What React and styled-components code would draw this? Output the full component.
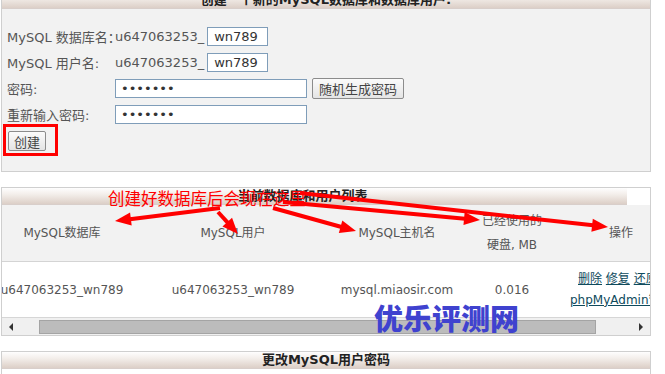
import React from 'react';
import styled, { createGlobalStyle } from 'styled-components';

const GlobalStyle = createGlobalStyle`
  html, body {
    margin: 0;
    padding: 0;
    background: #fff;
  }
  body {
    font-family: "DejaVu Sans", "Noto Sans CJK SC", sans-serif;
    font-size: 13px;
    color: #555;
    overflow: hidden;
  }
`;

const Page = styled.div`
  position: relative;
  width: 665px;
  height: 374px;
  overflow: hidden;
`;

// the page is scrolled down a little, so the first panel's title is cut
const Stack = styled.div`
  display: flex;
  flex-direction: column;
  gap: 15px;
  margin-top: -10px;
  padding-left: 1px;
`;

const Panel = styled.section`
  width: 650px;
  box-sizing: border-box;
  border: 1px solid #cfcfcf;
  background: ${(p) => p.$bg || '#f2f2f2'};
`;

const PanelHead = styled.div`
  width: ${(p) => p.$w || 'auto'};
  height: ${(p) => p.$h || 16}px;
  line-height: ${(p) => p.$h || 16}px;
  box-sizing: content-box;
  padding-right: ${(p) => p.$pr || 0}px;
  background: linear-gradient(#fefefe 0%, #f3eeea 40%, #dccfc7 100%);
  border-bottom: 1px solid #d8ceca;
  font-weight: bold;
  font-size: 13px;
  color: #222;
  text-align: center;
  white-space: nowrap;
  overflow: hidden;
`;

const FormBody = styled.div`
  padding: 14px 0 18px 5px;
`;

const FormGrid = styled.div`
  display: grid;
  grid-template-columns: 108px auto;
  grid-auto-rows: 26px;
  align-items: center;
`;

const Label = styled.span`
  color: #555;
  white-space: nowrap;
`;

const Value = styled.div`
  display: flex;
  align-items: center;
  gap: ${(p) => p.$gap || 3}px;
  white-space: nowrap;
`;

const TextInput = styled.input`
  box-sizing: border-box;
  width: ${(p) => p.$w}px;
  height: 19px;
  margin: 0;
  padding: 0 0 0 ${(p) => p.$pl || 6}px;
  border: 1px solid #7f9db9;
  background: #fff;
  font: 13px "DejaVu Sans", sans-serif;
  color: #333;
  outline: none;
`;

const Button = styled.button`
  box-sizing: border-box;
  height: ${(p) => p.$h || 20}px;
  margin: 0;
  padding: 0 ${(p) => p.$px || 6}px;
  border: 1px solid #8c8c8c;
  border-radius: 2px;
  background: linear-gradient(#fbfbfb, #e4e4e4);
  font: 13px "DejaVu Sans", "Noto Sans CJK SC", sans-serif;
  color: #444;
`;

const Marked = styled.div`
  display: inline-block;
  align-self: flex-start;
  margin-left: -1px;
  padding: 4px 9px 2px 2px;
  outline: 3px solid #ff0000;
  line-height: 0;
`;

const TableView = styled.div`
  overflow: hidden;
`;

const Grid = styled.div`
  display: grid;
  grid-template-columns: 170px 172px 156px 74px 144px;
  width: 716px;
  margin-left: -25px;
  height: ${(p) => p.$h}px;
  background: ${(p) => p.$bg};
  border-bottom: ${(p) => (p.$line ? '1px solid #d4d4d4' : 'none')};
  font-size: 12px;
  color: #555;
`;

const Cell = styled.div`
  display: flex;
  align-items: center;
  justify-content: ${(p) => (p.$left ? 'flex-start' : 'center')};
  padding-left: ${(p) => p.$pl || 0}px;
  text-align: center;
  line-height: 24px;
  white-space: nowrap;
`;

const Links = styled.div`
  text-align: left;
  line-height: 21px;
  & a {
    color: #0e4a5c;
    text-decoration: underline;
  }
`;

const LinkLine = styled.div`
  padding-left: ${(p) => p.$indent || 0}px;
  white-space: nowrap;
`;

const HScroll = styled.div`
  height: 17px;
  border-top: 1px solid #d6d6d6;
  background: #f0f0f0;
  display: flex;
  align-items: center;
`;

const ScrollEnd = styled.div`
  width: ${(p) => (p.$grow ? 'auto' : '37px')};
  flex: ${(p) => (p.$grow ? 1 : 'none')};
  display: flex;
  justify-content: ${(p) => (p.$dir === 'left' ? 'flex-start' : 'flex-end')};
  padding: ${(p) => (p.$dir === 'left' ? '0 0 0 7px' : '0 7px 0 0')};
  box-sizing: border-box;
`;

const Tri = styled.span`
  width: 0;
  height: 0;
  border-top: 4px solid transparent;
  border-bottom: 4px solid transparent;
  ${(p) => (p.$dir === 'left' ? 'border-right' : 'border-left')}: 4px solid #333;
`;

const Thumb = styled.div`
  box-sizing: border-box;
  width: 557px;
  height: 14px;
  background: #bcbcbc;
  border: 1px solid #a4a4a4;
`;

const BottomBody = styled.div`
  height: 40px;
  background: #fff;
`;

const Note = styled.div`
  position: absolute;
  left: 108px;
  top: 188px;
  font-family: "Noto Sans CJK SC", sans-serif;
  font-size: 16.5px;
  letter-spacing: 0;
  line-height: 20px;
  color: #ff0000;
  white-space: nowrap;
`;

const Arrows = styled.svg`
  position: absolute;
  left: 0;
  top: 0;
  pointer-events: none;
`;

const Watermark = styled.div`
  position: absolute;
  left: 374px;
  top: 299px;
  font-family: "Noto Sans CJK SC", sans-serif;
  font-weight: 900;
  font-size: 29px;
  line-height: 36px;
  color: #3f42cf;
  white-space: nowrap;
`;

const Arrow = ({ x1, y1, x2, y2 }) => {
  const dx = x2 - x1;
  const dy = y2 - y1;
  const len = Math.hypot(dx, dy);
  const ux = dx / len;
  const uy = dy / len;
  const hl = 16;
  const hw = 6.5;
  const bx = x2 - ux * hl;
  const by = y2 - uy * hl;
  const pts = `${x2},${y2} ${bx - uy * hw},${by + ux * hw} ${bx + uy * hw},${by - ux * hw}`;
  return (
    <g>
      <line x1={x1} y1={y1} x2={bx + ux} y2={by + uy} stroke="#ff0000" strokeWidth="4" />
      <polygon points={pts} fill="#ff0000" />
    </g>
  );
};

const arrows = [
  { x1: 220, y1: 208, x2: 115, y2: 221 },
  { x1: 218, y1: 212, x2: 238, y2: 234 },
  { x1: 273, y1: 208, x2: 356, y2: 231 },
  { x1: 283, y1: 202, x2: 480, y2: 220 },
  { x1: 300, y1: 193, x2: 608, y2: 227 },
];

const App = () => {
  return (
    <Page>
      <GlobalStyle />
      <Stack>
        <Panel>
          <PanelHead $h={17}>创建一个新的MySQL数据库和数据库用户:</PanelHead>
          <FormBody>
            <FormGrid>
              <Label>MySQL 数据库名：</Label>
              <Value>
                <span>u647063253_</span>
                <TextInput $w={61} defaultValue="wn789" />
              </Value>
              <Label>MySQL 用户名:</Label>
              <Value>
                <span>u647063253_</span>
                <TextInput $w={61} defaultValue="wn789" />
              </Value>
              <Label>密码:</Label>
              <Value $gap={5}>
                <TextInput $w={192} type="password" defaultValue="1234567" $pl={5} />
                <Button $h={21}>随机生成密码</Button>
              </Value>
              <Label>重新输入密码:</Label>
              <Value>
                <TextInput $w={192} type="password" defaultValue="1234567" $pl={5} />
              </Value>
            </FormGrid>
            <Marked>
              <Button $px={5}>创建</Button>
            </Marked>
          </FormBody>
        </Panel>

        <Panel $bg="#fff">
          <PanelHead $w="601px" $pr={24}>当前数据库和用户列表</PanelHead>
          <TableView>
            <Grid $h={56} $bg="#f2f2f2" $line>
              <Cell>MySQL数据库</Cell>
              <Cell>MySQL用户</Cell>
              <Cell>MySQL主机名</Cell>
              <Cell>已经使用的<br />硬盘, MB</Cell>
              <Cell>操作</Cell>
            </Grid>
            <Grid $h={55} $bg="#fff">
              <Cell>u647063253_wn789</Cell>
              <Cell>u647063253_wn789</Cell>
              <Cell>mysql.miaosir.com</Cell>
              <Cell>0.016</Cell>
              <Cell $left $pl={21}>
                <Links>
                  <LinkLine $indent={8}>
                    <a href="#">删除</a> <a href="#">修复</a> <a href="#">还原</a>
                  </LinkLine>
                  <LinkLine>
                    <a href="#">phpMyAdmin管理</a>
                  </LinkLine>
                </Links>
              </Cell>
            </Grid>
          </TableView>
          <HScroll>
            <ScrollEnd $dir="left">
              <Tri $dir="left" />
            </ScrollEnd>
            <Thumb />
            <ScrollEnd $dir="right" $grow>
              <Tri $dir="right" />
            </ScrollEnd>
          </HScroll>
        </Panel>

        <Panel $bg="#fff">
          <PanelHead>更改MySQL用户密码</PanelHead>
          <BottomBody />
        </Panel>
      </Stack>

      <Note>创建好数据库后会现在这里</Note>
      <Arrows width="665" height="374" viewBox="0 0 665 374">
        {arrows.map((a, i) => (
          <Arrow key={i} {...a} />
        ))}
      </Arrows>
      <Watermark>优乐评测网</Watermark>
    </Page>
  );
};

export default App;
